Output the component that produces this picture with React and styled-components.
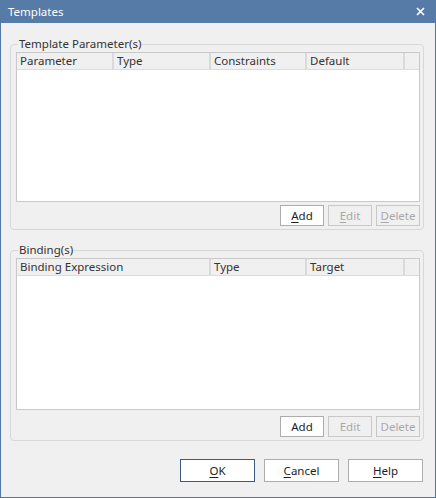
import React from 'react';
import styled, { createGlobalStyle } from 'styled-components';

const GlobalStyle = createGlobalStyle`
  html, body { margin: 0; padding: 0; background: #f0f0f0; }
  * { box-sizing: border-box; }
`;

const Dialog = () => {
  const params = [
    { label: 'Parameter', width: 97 },
    { label: 'Type', width: 97 },
    { label: 'Constraints', width: 96 },
    { label: 'Default', width: 98 },
  ];
  const bindings = [
    { label: 'Binding Expression', width: 194 },
    { label: 'Type', width: 96 },
    { label: 'Target', width: 98 },
  ];

  return (
    <Window>
      <TitleBar>
        <span>Templates</span>
        <svg width="9" height="9" viewBox="0 0 9 9">
          <path d="M1 1 L8 8 M8 1 L1 8" stroke="#fff" strokeWidth="1.7" />
        </svg>
      </TitleBar>
      <Body>
        <Group>
          <Legend>Template Parameter(s)</Legend>
          <Table $bodyHeight={131}>
            <Header>
              {params.map(c => (
                <HeadCell key={c.label} style={{ width: c.width }}>{c.label}</HeadCell>
              ))}
              <HeadFiller />
            </Header>
          </Table>
          <ButtonRow $gap={3}>
            <SmallButton><u>A</u>dd</SmallButton>
            <SmallButton disabled><u>E</u>dit</SmallButton>
            <SmallButton disabled><u>D</u>elete</SmallButton>
          </ButtonRow>
        </Group>
        <Group $top={13}>
          <Legend>Binding(s)</Legend>
          <Table $bodyHeight={133}>
            <Header>
              {bindings.map(c => (
                <HeadCell key={c.label} style={{ width: c.width }}>{c.label}</HeadCell>
              ))}
              <HeadFiller />
            </Header>
          </Table>
          <ButtonRow $gap={6}>
            <SmallButton>Add</SmallButton>
            <SmallButton disabled>Edit</SmallButton>
            <SmallButton disabled>Delete</SmallButton>
          </ButtonRow>
        </Group>
        <Footer>
          <DialogButton $primary><u>O</u>K</DialogButton>
          <DialogButton><u>C</u>ancel</DialogButton>
          <DialogButton><u>H</u>elp</DialogButton>
        </Footer>
      </Body>
    </Window>
  );
};

export default function App() {
  return (
    <>
      <GlobalStyle />
      <Dialog />
    </>
  );
}

const Window = styled.div`
  width: 436px;
  height: 498px;
  background: #f0f0f0;
  border: 1px solid #52769f;
  border-top: none;
  font-family: "Noto Sans", "Open Sans", sans-serif;
  font-size: 11.5px;
  color: #1e1e1e;
  display: flex;
  flex-direction: column;
`;

const TitleBar = styled.div`
  height: 23px;
  margin: 0 -1px;
  background: #557ba6;
  color: #fff;
  display: flex;
  align-items: center;
  justify-content: space-between;
  padding: 0 11px 1px 8px;
  font-size: 11.5px;

  svg { margin-top: 1px; }
`;

const Body = styled.div`
  flex: 1;
  display: flex;
  flex-direction: column;
  padding: 14px 11px 0 9px;
`;

const Group = styled.fieldset`
  margin: ${p => p.$top || 0}px 0 0 0;
  padding: 1px 3px 3px 5px;
  border: 1px solid #d8d8d8;
  border-radius: 4px;
  min-width: 0;
`;

const Legend = styled.legend`
  padding: 0 1px;
  margin-left: 2px;
  color: #333;
  line-height: 14px;
`;

const Table = styled.div`
  border: 1px solid #c9c9c9;
  background: #fff;
  padding-bottom: ${p => p.$bodyHeight}px;
`;

const Header = styled.div`
  display: flex;
  height: 17px;
  background: #f0f0f0;
  border-bottom: 1px solid #dcdcdc;
`;

const HeadCell = styled.div`
  flex: none;
  padding-left: 3px;
  line-height: 16px;
  color: #333;
  border-right: 2px solid #dadada;
  white-space: nowrap;
  overflow: hidden;
`;

const HeadFiller = styled.div`
  flex: 1;
`;

const ButtonRow = styled.div`
  display: flex;
  justify-content: flex-end;
  gap: 4px;
  margin-top: ${p => p.$gap}px;
`;

const SmallButton = styled.button`
  width: 44px;
  height: 21px;
  padding: 0;
  background: ${p => (p.disabled ? '#f0f0f0' : '#fff')};
  border: 1px solid ${p => (p.disabled ? '#c8c8c8' : '#adadad')};
  color: ${p => (p.disabled ? '#a8a8a8' : '#1e1e1e')};
  font-family: inherit;
  font-size: 11.5px;
  u { text-underline-offset: 2px; }
`;

const Footer = styled.div`
  display: flex;
  justify-content: flex-end;
  gap: 9px;
  margin-top: 18px;
  padding-right: 1px;
`;

const DialogButton = styled.button`
  width: 75px;
  height: 23px;
  padding: 0;
  background: #fff;
  border: 1px solid ${p => (p.$primary ? '#3c5a80' : '#adadad')};
  color: #1e1e1e;
  font-family: inherit;
  font-size: 11.5px;
  u { text-underline-offset: 2px; }
`;
